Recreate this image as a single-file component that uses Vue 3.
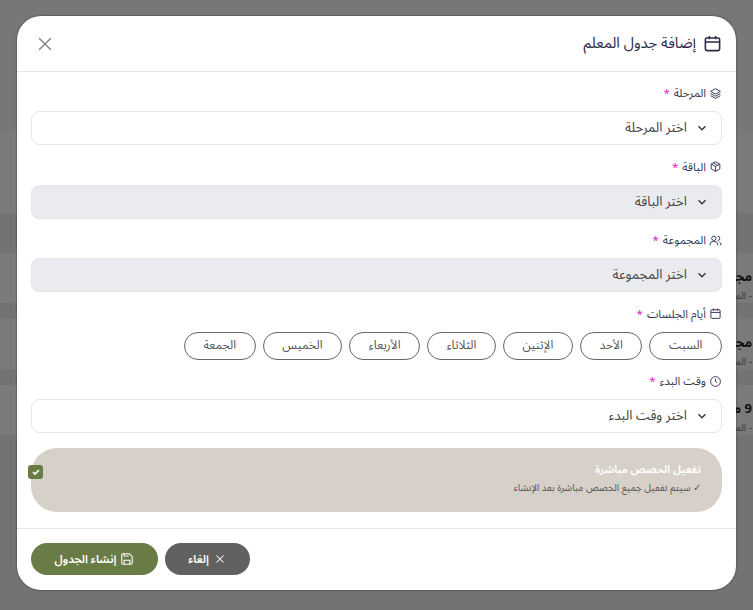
<script setup>
const days = ['السبت', 'الأحد', 'الإثنين', 'الثلاثاء', 'الأربعاء', 'الخميس', 'الجمعة']
const rows = [{ t: 'مجموعة' }, { t: 'مجموعة' }, { t: '9 مجموعة' }]
</script>

<template>
  <div class="page" dir="rtl">
    <div class="behind">
      <div class="band-head"></div>
      <div class="band-top"></div>
      <div v-for="(r, i) in rows" :key="i" class="band">
        <div class="bg-title">{{ r.t }}</div>
        <div class="bg-sub">- المرحلة</div>
      </div>
    </div>
    <div class="overlay"></div>

    <section class="modal">
      <header class="head">
        <h2 class="title">
          <svg class="ti" viewBox="0 0 24 24"><rect x="3" y="5" width="18" height="16" rx="2"/><path d="M16 2.500v4M8 2.500v4M3 10h18"/></svg>
          إضافة جدول المعلم
        </h2>
        <svg class="close" viewBox="0 0 24 24"><path d="M5 5l14 14M19 5L5 19"/></svg>
      </header>

      <div class="body">
        <div class="field">
          <label class="lab">
            <svg class="li" viewBox="0 0 24 24"><path d="M12 3l9 5-9 5-9-5z"/><path d="M3 12l9 5 9-5M3 16l9 5 9-5"/></svg>
            المرحلة <span class="req">*</span>
          </label>
          <div class="sel">
            <svg class="chev" viewBox="0 0 24 24"><path d="M6 9l6 6 6-6"/></svg>
            <span>اختر المرحلة</span>
          </div>
        </div>
        <div class="field">
          <label class="lab">
            <svg class="li" viewBox="0 0 24 24"><path d="M12 3l8 4.500v9L12 21l-8-4.500v-9z"/><path d="M4 7.500l8 4.500 8-4.500M12 12v9M8 5.300l8 4.500"/></svg>
            الباقة <span class="req">*</span>
          </label>
          <div class="sel off">
            <svg class="chev" viewBox="0 0 24 24"><path d="M6 9l6 6 6-6"/></svg>
            <span>اختر الباقة</span>
          </div>
        </div>
        <div class="field">
          <label class="lab">
            <svg class="li" viewBox="0 0 24 24"><circle cx="9" cy="8" r="4"/><path d="M2 21v-2a5 5 0 0 1 5-5h4a5 5 0 0 1 5 5v2M16 4a4 4 0 0 1 0 8M22 21v-2a5 5 0 0 0-3-4.500"/></svg>
            المجموعة <span class="req">*</span>
          </label>
          <div class="sel off">
            <svg class="chev" viewBox="0 0 24 24"><path d="M6 9l6 6 6-6"/></svg>
            <span>اختر المجموعة</span>
          </div>
        </div>
        <div class="field">
          <label class="lab">
            <svg class="li" viewBox="0 0 24 24"><rect x="3.500" y="5" width="17" height="16" rx="2"/><path d="M16 3v4M8 3v4M3.500 10h17"/></svg>
            أيام الجلسات <span class="req">*</span>
          </label>
          <div class="days">
            <button v-for="d in days" :key="d" class="day">{{ d }}</button>
          </div>
        </div>
        <div class="field last">
          <label class="lab">
            <svg class="li" viewBox="0 0 24 24"><circle cx="12" cy="12" r="9"/><path d="M12 7v5l3 2"/></svg>
            وقت البدء <span class="req">*</span>
          </label>
          <div class="sel">
            <svg class="chev" viewBox="0 0 24 24"><path d="M6 9l6 6 6-6"/></svg>
            <span>اختر وقت البدء</span>
          </div>
        </div>
        <div class="toggle">
          <div class="ttext">
            <div class="tt">تفعيل الحصص مباشرة</div>
            <div class="ts">✓ سيتم تفعيل جميع الحصص مباشرة بعد الإنشاء</div>
          </div>
          <span class="check">
            <svg viewBox="0 0 24 24"><path d="M5 12.500l4.500 4.500L19 7.500"/></svg>
          </span>
        </div>
      </div>

      <footer class="foot">
        <button class="btn save">
          <svg viewBox="0 0 24 24"><path d="M5 3h11l5 5v11a2 2 0 0 1-2 2H5a2 2 0 0 1-2-2V5a2 2 0 0 1 2-2z"/><path d="M7 21v-7h10v7M7 3v4h8"/></svg>
          إنشاء الجدول
        </button>
        <button class="btn cancel">
          <svg viewBox="0 0 24 24"><path d="M6 6l12 12M18 6L6 18"/></svg>
          إلغاء
        </button>
      </footer>
    </section>
  </div>
</template>

<style>
html, body { margin: 0; padding: 0; }
</style>

<style scoped>
.page {
  position: relative;
  width: 753px;
  height: 610px;
  overflow: hidden;
  background: #eeeeee;
  font-family: "Noto Sans Arabic", "Noto Sans", sans-serif;
}
.behind { position: absolute; inset: 0; display: flex; flex-direction: column; gap: 16px; background: #e6e6e6; }
.band-head { height: 130px; margin-bottom: -16px; background: #eee; flex: none; }
.band-top { height: 83px; margin-bottom: 24px; background: #f5f5f5; flex: none; }
.band { background: #f5f5f5; height: 50px; flex: none; padding-top: 15px; box-sizing: border-box; padding-right: 1px; }
.bg-title { font-size: 13px; font-weight: 700; color: #222; white-space: nowrap; line-height: 18px; }
.bg-sub { font-size: 10px; color: #777; white-space: nowrap; line-height: 14px; margin-top: 3px; }
.overlay { position: absolute; inset: 0; background: rgba(0,0,0,.5); }
.modal {
  position: absolute;
  left: 17px; top: 16px;
  width: 719px; height: 574px;
  background: #fff;
  border-radius: 24px;
  display: flex;
  flex-direction: column;
  box-shadow: 0 0 2px rgba(0,0,0,.6);
}
.head {
  height: 56px;
  box-sizing: border-box;
  flex: none;
  display: flex;
  align-items: center;
  justify-content: space-between;
  padding: 0 14px 0 18px;
  border-bottom: 1px solid #e5e5e5;
}
.title { margin: 0; display: flex; align-items: center; gap: 7px; font-size: 14.800px; font-weight: 400; color: #2a2a4a; }
.ti { width: 19px; height: 19px; fill: none; stroke: #2a2a4a; stroke-width: 2; }
.close { width: 20px; height: 20px; fill: none; stroke: #808080; stroke-width: 1.600; }
.body { flex: 1; padding: 13px 14px 0; display: flex; flex-direction: column; }
.field { display: flex; flex-direction: column; margin-bottom: 13.600px; }
.field.last { margin-bottom: 14.600px; }
.lab { display: flex; align-items: center; gap: 3px; font-size: 11.500px; color: #3a3a55; height: 16px; margin-bottom: 10px; }
.li { width: 13px; height: 13px; fill: none; stroke: #3a3a55; stroke-width: 1.800; }
.req { color: #e81cc0; margin-right: 1px; }
.sel {
  height: 34px;
  box-sizing: border-box;
  border: 1px solid #e5e6ea;
  border-radius: 8px;
  display: flex;
  align-items: center;
  gap: 8px;
  padding: 0 12px;
  font-size: 13.300px;
  color: #444;
  background: #fff;
}
.sel.off { background: #e9ebef; }
.chev { width: 14px; height: 14px; fill: none; stroke: #333; stroke-width: 2.200; }
.days { display: flex; gap: 7px; }
.day {
  height: 28px;
  padding: 0 18.600px;
  border: 1px solid #666;
  border-radius: 14px;
  background: #fff;
  color: #555;
  font: inherit;
  font-size: 12px;
}
.toggle {
  position: relative;
  height: 64px;
  box-sizing: border-box;
  padding: 0 21px 3px 0;
  background: #d6d0c9;
  border-radius: 26px;
  display: flex;
  align-items: center;
}
.tt { color: #fff; font-size: 11px; font-weight: 600; line-height: 16px; margin-bottom: 3px; }
.ts { color: #555; font-size: 9.700px; line-height: 14px; }
.check {
  position: absolute;
  left: -3px; top: 17px;
  width: 15px; height: 14px;
  background: #6a7c45;
  border-radius: 3px;
  display: flex; align-items: center; justify-content: center;
}
.check svg { width: 10px; height: 10px; fill: none; stroke: #fff; stroke-width: 4; }
.foot {
  height: 62px;
  box-sizing: border-box;
  flex: none;
  border-top: 1px solid #e3e3ea;
  display: flex;
  direction: ltr;
  align-items: flex-start;
  padding: 14px 14px 0;
  gap: 7px;
}
.btn {
  height: 32px;
  border: 0;
  border-radius: 16px;
  color: #fff;
  font: inherit;
  font-size: 11.300px;
  font-weight: 600;
  display: flex;
  align-items: center;
  justify-content: center;
  gap: 4px;
  direction: rtl;
}
.btn svg { width: 14px; height: 14px; fill: none; stroke: #fff; stroke-width: 1.800; }
.cancel { width: 85px; background: #616161; }
.save { width: 127px; background: #6a7c45; }
</style>
